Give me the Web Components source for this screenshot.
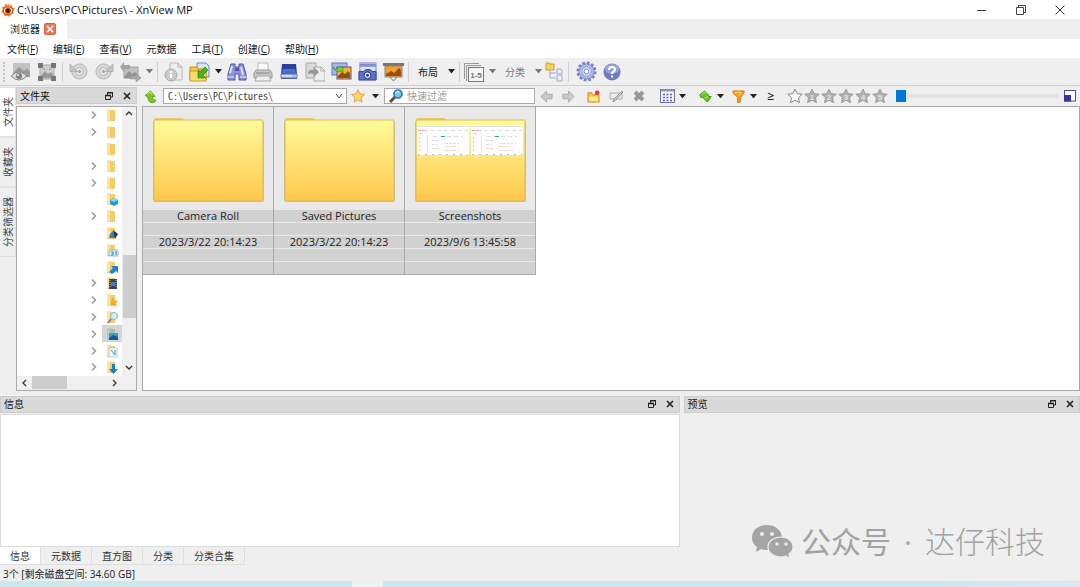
<!DOCTYPE html>
<html lang="zh-CN">
<head>
<meta charset="utf-8">
<title>XnView MP</title>
<style>
html,body{margin:0;height:100%}
body{font:10px/14px "Open Sans","Noto Sans CJK SC",sans-serif;color:#222;background:#efefef;overflow:hidden}
</style>
</head>
<body>
<xn-app></xn-app>
<script>
const ICONS = {
  logo:[14,'0 0 20 20','<path d="M10 0l2 4 4-2v4l4 2-3 3 1 4-4 1-2 4-3-2-4 1-1-4-4-2 3-3-2-4 4-1 1-4 4 2z" fill="#f0882c"/><ellipse cx="10" cy="11" rx="8" ry="6" fill="#d9521b"/><ellipse cx="10" cy="11" rx="6" ry="4.500" fill="#ffe9b8"/><circle cx="10" cy="11" r="4" fill="#a02508"/><circle cx="10" cy="11" r="2" fill="#300"/>'],
  min:[10,'0 0 10 10','<path d="M0 5.500h9" stroke="#444"/>'],
  max:[10,'0 0 10 10','<path d="M.5 2.500h7v7h-7zM2.500 2.500v-2h7v7h-2" fill="none" stroke="#444"/>'],
  cls:[10,'0 0 10 10','<path d="M.5.5l9 9m0-9l-9 9" stroke="#333"/>'],
  x:[8,'0 0 8 8','<path d="M1 1l6 6m0-6l-6 6" stroke="currentColor" stroke-width="1.600"/>'],
  dock:[8,'0 0 8 8','<path d="M.5 3.500h5v4h-5zM2.500 3.500v-3h5v4.500h-2" fill="none" stroke="#222"/><path d="M0 3.500h6M2 .9h6" stroke="#222" stroke-width="1.400"/>'],
  arrow:[7,'0 0 8 5','<path d="M0 0h8L4 5z" fill="currentColor"/>'],
  view:[20,'0 0 20 20','<rect x="2" y="1" width="17" height="14" fill="#c2c2c2"/><path d="M2 11l6-6 5 4 3-3 3 4v5H2z" fill="#9a9a9a"/><path d="M0 14q8-8 16 0-8 8-16 0z" fill="#ddd" stroke="#888"/><circle cx="8" cy="14" r="3" fill="#808080"/><circle cx="7" cy="13" r="1" fill="#eee"/>'],
  full:[20,'0 0 20 20','<rect x="3" y="3" width="14" height="14" fill="#cfcfcf"/><path d="M4 14l4-5 3 3 3-2 3 4v2H4z" fill="#999"/><path d="M3 3h14v14H3z" fill="none" stroke="#aaa"/><path d="M1 1h5v5H1zM14 1h5v5h-5zM1 14h5v5H1zM14 14h5v5h-5z" fill="#777"/><path d="M5 5l3 3M15 5l-3 3M5 15l3-3M15 15l-3-3" stroke="#888"/>'],
  rotl:[19,'0 0 20 20','<circle cx="11" cy="10" r="8" fill="#d6d6d6" stroke="#b4b4b4"/><circle cx="11" cy="10" r="4" fill="#efefef" stroke="#b4b4b4"/><circle cx="11" cy="10" r="1.800" fill="#aaa"/><path d="M1 2v8h8z" fill="#c4c4c4" stroke="#aaa" stroke-width=".8"/>'],
  rotr:[19,'0 0 20 20','<circle cx="9" cy="10" r="8" fill="#d6d6d6" stroke="#b4b4b4"/><circle cx="9" cy="10" r="4" fill="#efefef" stroke="#b4b4b4"/><circle cx="9" cy="10" r="1.800" fill="#aaa"/><path d="M19 2v8h-8z" fill="#c4c4c4" stroke="#aaa" stroke-width=".8"/>'],
  conv:[21,'0 0 21 20','<rect x="4" y="5" width="14" height="11" fill="#c0c0c0" stroke="#a4a4a4"/><path d="M4 15l5-6 3 3 3-2 3 4v2H4z" fill="#939393"/><path d="M0 5l4-5v3h6v4H4v3z" fill="#a4a4a4"/><path d="M10 14h6v-3l5 5-5 4v-3h-6z" fill="#aaa" stroke="#888" stroke-width=".5"/>'],
  info:[19,'0 0 19 20','<path d="M6 1h8l4 4v13H6z" fill="#eee" stroke="#bbb"/><path d="M14 1v4h4" fill="none" stroke="#aaa"/><circle cx="7" cy="13" r="6" fill="#ccc" stroke="#aaa"/><path d="M7 9v2m0 1v4" stroke="#fff" stroke-width="2"/>'],
  open:[21,'0 0 21 20','<path d="M8 1h9l3 3v11H8z" fill="#d7e4fa" stroke="#6b8bd0"/><path d="M1 5h7l1 2h8v11H1z" fill="#f6c443" stroke="#c88a14"/><path d="M1 9h16v10H1z" fill="#ffdb6c" stroke="#d29a20"/><path d="M9 8v8h8l-3-3 5-5-3-3-5 5z" fill="#41b51f" stroke="#27850f" stroke-width=".7"/>'],
  bino:[20,'0 0 20 20','<path d="M4 2h4v3h4V2h4l3 10v6h-7v-6H8v6H1v-6z" fill="#8c93dc" stroke="#4f56a9"/><path d="M3 11l2-7M14 5l2 8" stroke="#dfe2ff" stroke-width="2"/><path d="M1 15h6m6 0h6" stroke="#b9beee" stroke-width="2"/><rect x="8" y="6" width="4" height="3" fill="#4f56a9"/>'],
  print:[20,'0 0 20 20','<path d="M5 1h10v9H5z" fill="#f8f8f8" stroke="#bbb"/><path d="M3 8h14l2 3v5H1v-5z" fill="#c6c6c6" stroke="#999"/><path d="M4 14h12l2 5H2z" fill="#eee" stroke="#aaa"/><path d="M3 11h14" stroke="#888"/>'],
  scan:[18,'0 0 18 18','<path d="M2 1h14l1 10H1z" fill="#2c3f9e"/><path d="M3 6h12l1 4H2z" fill="#4a70cc"/><path d="M1 11h16v4H1z" fill="#a9bcec" stroke="#7383c4"/><path d="M2 13h10" stroke="#fff"/><path d="M1 15.500h16" stroke="#555fa2"/>'],
  export:[20,'0 0 20 20','<path d="M1 1h10v15H1z" fill="#dadada" stroke="#aaa"/><path d="M9 5h7l4 4v10H9z" fill="#eee" stroke="#aaa"/><path d="M16 5v4h4" fill="none" stroke="#aaa"/><path d="M3 12q0-5 6-4V5l5 5-5 5v-3q-4-1-6 0z" fill="#999"/>'],
  batch:[21,'0 0 21 20','<rect x="1" y="1" width="15" height="12" fill="#a8b8ee" stroke="#6475c4"/><rect x="6" y="5" width="14" height="12" fill="#f9b22b" stroke="#4a58aa"/><path d="M7 14l4-4 3 2 3-3 2 2v5H7z" fill="#9b4a0a"/><path d="M2 5q2 3 5 2l-1-2h6v6l-2-2q-6 2-8-4z" fill="#7bc936" stroke="#30890f" stroke-width=".6"/>'],
  cam:[19,'0 0 20 20','<rect x="2" y="1" width="17" height="17" fill="#dce4f7" stroke="#7a86c5"/><path d="M2 2h17v3H2z" fill="#7f8fd8"/><path d="M1 10h5l2-2h5l2 2h4v9H1z" fill="#5d6fc8" stroke="#36458f"/><circle cx="10" cy="14" r="3.500" fill="#dfeaff" stroke="#24347c"/><circle cx="10" cy="14" r="1.500" fill="#24347c"/>'],
  slide:[21,'0 0 21 20','<path d="M7 15l3.500 4 3.500-4" stroke="#777" fill="none"/><path d="M0 1h21v3H0z" fill="#777"/><rect x="2" y="4" width="17" height="11" fill="#f8a020" stroke="#888"/><path d="M3 12l5-3 3 2 5-5 2 2v6H3z" fill="#9c4d0c"/>'],
  pages:[20,'0 0 20 20','<path d="M.5 17V1.500H15M2.500 19V3.500H17" fill="none" stroke="#999"/><rect x="4.500" y="5.500" width="15" height="14" fill="#f5f5f5" stroke="#777"/><text x="12" y="16" text-anchor="middle" font-size="8" font-family="Liberation Sans" font-weight="bold" fill="#777">1-5</text>'],
  tree:[18,'0 0 18 20','<path d="M1 1h3l1 1h4v6H1z" fill="#fbd35b" stroke="#d49b26"/><path d="M5 8v8h6M5 11h6M12 7h4l1 1v4h-5zM12 13h4l1 1v5h-5z" fill="#ececf6" stroke="#a9aac8"/>'],
  gear:[21,'0 0 22 22','<circle cx="11" cy="11" r="9" fill="none" stroke="#7780c4" stroke-width="3" stroke-dasharray="2.800 1.912"/><circle cx="11" cy="11" r="8" fill="#b4bbec" stroke="#7680c6"/><circle cx="11" cy="11" r="5" fill="#d8dcfa" stroke="#8f98d8"/><circle cx="11" cy="11" r="2.500" fill="#fff" stroke="#7680c6"/>'],
  help:[18,'0 0 18 18','<circle cx="9" cy="9" r="8.500" fill="#6f79c4"/><ellipse cx="9" cy="6" rx="7" ry="5" fill="#9aa2e2"/><path d="M6 7q0-3 3-3t3 2.500c0 2-3 2-3 4.500M9 12.500v2" fill="none" stroke="#fff" stroke-width="2"/>'],
  up:[13,'0 0 14 14','<path d="M1 6l6-5 5 6H9c0 3 2 4 4 4-3 5-9 3-9-4z" fill="#7cc51a" stroke="#4c9110" stroke-width=".8"/><path d="M3 5l4-3 2 3" stroke="#d3ef7c" fill="none"/>'],
  chev:[8,'0 0 8 8','<path d="M1 2l3 4 3-4" fill="none" stroke="#555"/>'],
  fav:[14,'0 0 16 16','<path d="M8 .8l2.200 4.800 5.200.6-3.900 3.500 1.100 5.300L8 12.400 3.400 15l1.100-5.300L.6 6.200l5.200-.6z" fill="#fcd469" stroke="#e09838"/>'],
  mag:[14,'0 0 14 14','<path d="M1 13l5-5" stroke="#6b4a3a" stroke-width="3"/><circle cx="9" cy="5" r="4" fill="#7cc4f4" stroke="#2374bd" stroke-width="1.600"/><path d="M6.500 4q2-3 4-1" stroke="#fff" fill="none"/>'],
  back:[13,'0 0 14 14','<path d="M1 7l6-6v3.500h6v5H7V13z" fill="#c9c9c9" stroke="#a9a9a9"/>'],
  fwd:[13,'0 0 14 14','<path d="M13 7L7 1v3.500H1v5h6V13z" fill="#c9c9c9" stroke="#a9a9a9"/>'],
  newf:[13,'0 0 14 14','<path d="M1 3h4l1 2h7v8H1z" fill="#f6c247" stroke="#d08a20"/><path d="M2 7h10v5H2z" fill="#ffe993"/><circle cx="11" cy="3" r="2.500" fill="#dd3c32"/>'],
  ren:[14,'0 0 14 14','<path d="M1 4h12v6H1z" fill="#eee" stroke="#b0b0b0"/><path d="M4 13l1-3 8-8 1 1-7 8z" fill="#ccc" stroke="#888" stroke-width=".8"/>'],
  del:[12,'0 0 12 12','<path d="M2 2l8 8m0-8l-8 8" stroke="#999" stroke-width="4"/>'],
  grid:[15,'0 0 15 14','<rect x=".5" y=".5" width="14" height="13" fill="#f6f6ff" stroke="#6b72b5"/><path d="M1 1.500h13" stroke="#8f95cf" stroke-width="2"/><path d="M3 5.500h9M3 8.500h9M3 11.500h9" stroke="#5b62ad" stroke-width="1.500" stroke-dasharray="2 1.500"/>'],
  tag:[13,'0 0 14 14','<path d="M1 5l5-4 4 4v2h3l-1 2-3 4-5-5H2z" fill="#69c31c" stroke="#3f8d10"/><path d="M3 5l3-3 2 2M6 9l4-2" stroke="#c8f08a" fill="none"/>'],
  fun:[13,'0 0 14 14','<path d="M1 1h12v2L9 8v5l-3 1V8L1 3z" fill="#fb9c16" stroke="#dc7708"/><path d="M3 2.500h7L6.800 7" stroke="#ffe08a" fill="none"/>'],
  frame:[12,'0 0 12 12','<rect x=".5" y=".5" width="11" height="10.500" fill="#fff" stroke="#4b4d9e"/><rect x="0" y="5" width="7" height="6.500" fill="#34349b"/>'],
  star0:[16,'0 0 16 16','<path d="M8 1l2.200 4.600 5 .6-3.700 3.500 1 5L8 12.300 3.500 14.700l1-5L.8 6.200l5-.6z" fill="#fbfbfb" stroke="#888"/>'],
  up1:[8,'0 0 8 8','<path d="M1 6l3-3 3 3" fill="none" stroke="#333" stroke-width="1.300"/>'],
  dn1:[8,'0 0 8 8','<path d="M1 2l3 3 3-3" fill="none" stroke="#333" stroke-width="1.300"/>'],
  lf1:[8,'0 0 8 8','<path d="M6 1L3 4l3 3" fill="none" stroke="#333" stroke-width="1.300"/>'],
  rt1:[8,'0 0 8 8','<path d="M2 1l3 3-3 3" fill="none" stroke="#333" stroke-width="1.300"/>'],
  exp:[8,'0 0 8 8','<path d="M2 .5L5.500 4 2 7.500" fill="none" stroke="#999" stroke-width="1.500"/>'],
  wechat:[42,'0 0 42 36','<path d="M16 1C7 1 1 6 1 14c0 4 2 7 5 9l-1 5 5-3c2 1 4 1 6 1 9 0 15-5 15-12S25 1 16 1z" fill="#a5a5a5"/><path d="M30 13c-7 0-13 4-13 10s6 10 13 10c2 0 4 0 5-1l4 3-1-5c3-2 4-4 4-7 0-6-5-10-12-10z" fill="#a5a5a5" stroke="#efefef" stroke-width="1.200"/><g fill="#efefef"><circle cx="11" cy="10" r="2"/><circle cx="21" cy="10" r="2"/><circle cx="26" cy="20" r="1.700"/><circle cx="35" cy="20" r="1.700"/></g>'],
};
for (let n = 1; n < 6; n++)
  ICONS['star' + n] = [16,'0 0 16 16',`<path d="M8 1l2.200 4.600 5 .6-3.700 3.500 1 5L8 12.300 3.500 14.700l1-5L.8 6.200l5-.6z" fill="#b0b0b0" stroke="#909090" stroke-width=".8"/><text x="8" y="12" text-anchor="middle" font-family="Liberation Sans" font-weight="bold" font-size="8" fill="#e4e4e4">${n}</text>`];

/* Small overlay badges of the folder tree */
const BADGES = {
  none:'',
  cube:'<path d="M5 8l4-2 4 2v4l-4 2-4-2z" fill="#1d9fd8"/><path d="M5 8l4-2 4 2-4 2z" fill="#7ae0f4"/>',
  dark:'<path d="M5 8l3-3 2 7H4z" fill="#3a7dbb"/><path d="M8 4l5 4-3 5z" fill="#333"/>',
  card:'<rect x="4" y="7" width="9" height="6" fill="#d5ecfa" stroke="#6fb5da" stroke-width=".7"/><path d="M6 9h2v3H6m4-3h2m-2 2h2" stroke="#3783b8" fill="none"/>',
  link:'<path d="M4 12l4-4-2-2h7v7l-2-2-4 3z" fill="#1e84d4"/>',
  film:'<rect x="4" y="3" width="8" height="10" fill="#36435b"/><path d="M5 4v8m6-8v8" stroke="#a9b9c8" stroke-dasharray="1 1"/><rect x="6" y="6" width="4" height="4" fill="#4e7ab5"/>',
  star:'<path d="M8 4l1 3 4 1-2 2 1 4-3-2-3 1 0-4z" fill="#fba92a"/>',
  find:'<circle cx="9" cy="6" r="3.500" fill="#d2effc" stroke="#7db8d5"/><path d="M6 9l-3 4" stroke="#779" stroke-width="1.500"/>',
  pic:'<rect x="4" y="6" width="9" height="7" fill="#3b9add"/><path d="M4 11l4-3 5 2v3H4z" fill="#135b9e"/>',
  note:'<rect x="4" y="4" width="8" height="9" fill="#eef7ff" stroke="#9ac2dc" stroke-width=".7"/><path d="M6 6l4 5V6" stroke="#4c92c0" fill="none"/>',
  down:'<path d="M7 4h3v5h3l-4.500 5L4 9h3z" fill="#1a7fd4"/>',
};

function define(name, css, html) {
  const t = document.createElement('template');
  t.innerHTML = `<style>*{box-sizing:border-box}${css}</style>${html}`;
  customElements.define(name, class extends HTMLElement {
    constructor() {
      super();
      this.attachShadow({mode:'open'}).append(t.content.cloneNode(true));
    }
  });
}
customElements.define('xn-icon', class extends HTMLElement {
  connectedCallback() {
    if (this.shadowRoot) return;
    const [w, box, art] = ICONS[this.getAttribute('name')];
    this.attachShadow({mode:'open'}).innerHTML =
      `<style>:host{display:inline-flex;flex:none}svg{display:block}</style><svg width="${w}" viewBox="${box}" aria-hidden="true">${art}</svg>`;
  }
});
const BTN = 'button,select,input{font:inherit;color:inherit;margin:0}button{display:inline-flex;align-items:center;justify-content:center;border:0;background:none;padding:0;flex:none}';
const b = (icon, cls='', label=icon) => `<button class="${cls}" aria-label="${label}"><xn-icon name="${icon}"></xn-icon></button>`;

define('xn-titlebar', `${BTN}:host{display:flex;align-items:center;height:19px;background:#fff;color:#111;font-size:11px;padding:0 10px 0 1px;gap:2px}
 span{flex:1}div{display:flex;gap:19px}button{width:20px;height:19px}`,
 `<xn-icon name="logo"></xn-icon><span>C:\\Users\\PC\\Pictures\\ - XnView MP</span><div>${b('min')}${b('max')}${b('cls')}</div>`);

define('xn-doctabs', `${BTN}:host{display:flex;height:20px;background:#efefef}
 div{display:flex;align-items:center;gap:4px;padding:0 10px;background:#fff;width:67px}
 .c{width:12px;height:12px;background:#e9785c;border:1px solid #d8644a;border-radius:2px;color:#fff}`,
 `<div><span>浏览器</span>${b('x','c','关闭')}</div>`);

define('xn-menubar', `${BTN}:host{display:flex;height:19px;background:#fff;padding:0 7px;gap:15px;color:#111}u{text-underline-offset:1px}`,
 [['文件','F'],['编辑','E'],['查看','V'],['元数据'],['工具','T'],['创建','C'],['帮助','H']].map(([t,k]) => `<button>${t}${k ? `(<u>${k}</u>)` : ''}</button>`).join(''));

define('xn-toolbar', `${BTN}:host{display:flex;align-items:center;height:28px;border-bottom:1px solid #cfcfcf;padding-left:3px}
 button{width:26px;height:24px}.a{width:12px;color:#222}.g{color:#777}.t{width:34px}.p{width:24px}.k{width:20px}
 i{width:5px;height:20px;flex:none;background:linear-gradient(#cfcfcf,#cfcfcf) center/1px 100% no-repeat}
 i.w{width:9px}i.grip{background:none;border-left:2px dotted #c4c4c4}`,
 `<i class="grip"></i>${b('view')}${b('full')}<i></i>${b('rotl')}${b('rotr')}${b('conv')}${b('arrow','a g')}<i></i>${b('info')}${b('open')}${b('arrow','a')}`
 + ['bino','print','scan','export','batch','cam','slide'].map(n => b(n)).join('')
 + `<i></i><button class="t">布局</button>${b('arrow','a')}<i></i>${b('pages','p')}${b('arrow','a g')}<button class="t g">分类</button>${b('arrow','a g')}${b('tree','k')}<i class="w"></i>${b('gear')}${b('help')}`);

define('xn-addressbar', `${BTN}:host{display:flex;align-items:center;height:20px;padding-right:2px}
 .f{display:flex;align-items:center;flex:none;height:16px;border:1px solid #a8a8a8;background:#fff}
 .path{width:184px;padding-right:3px;margin-left:4px}.filter{width:151px;padding-left:4px;gap:4px;margin-left:3px}
 select{appearance:none;border:0;background:none;flex:1;min-width:0;padding:0 4px;outline:0;height:14px;line-height:14px;font-family:"Noto Sans CJK SC",monospace;font-feature-settings:"hwid";color:#444}
 input[type=text]{border:0;background:none;flex:1;min-width:0;padding:0;outline:0;height:14px}input::placeholder{color:#999}
 .grp{display:flex;align-items:center;margin-left:3px}.grp.far{margin-left:8px}
 button{width:22px;height:18px}.n{width:17px}.a{width:12px;color:#222}.m{width:18px}.w{width:24px;font-weight:600;font-size:12px}
 input[type=range]{appearance:none;flex:1;min-width:0;height:14px;background:linear-gradient(#e3e3e3,#e3e3e3) center/100% 4px no-repeat;margin:0 3px 0 8px}
 input[type=range]::-webkit-slider-thumb{appearance:none;width:10px;height:12px;background:#0078d7;border-radius:0}`,
 `${b('up','n','上级')}<div class="f path"><select aria-label="路径"><option>C:\\Users\\PC\\Pictures\\</option></select><xn-icon name="chev"></xn-icon></div>
 ${b('fav')}${b('arrow','a')}<div class="f filter"><xn-icon name="mag"></xn-icon><input type="text" aria-label="快速过滤" placeholder="快速过滤"></div>
 ${b('back')}${b('fwd')}<div class="grp">${b('newf')}${b('ren','w')}${b('del')}</div><div class="grp far">${b('grid','m')}${b('arrow','a')}</div><div class="grp far">${b('tag','m')}${b('arrow','a')}</div><div class="grp">${b('fun','m')}${b('arrow','a')}<button class="w">≥</button></div><div class="grp">`
 + [0,1,2,3,4,5].map(n => b('star' + n, 'n')).join('') + `</div><input type="range" aria-label="缩略图大小" value="0">${b('frame','n')}`);

define('xn-sidetabs', `${BTN}:host{display:flex;flex-direction:column;width:16px;padding-top:1px}
 button{writing-mode:vertical-rl;text-orientation:sideways;transform:rotate(180deg);padding:9px 0;color:#444;border:1px solid #e2e2e2;border-right:0;width:16px}
 .on{background:#fff}`, `<button class="on">文件夹</button><button>收藏夹</button><button>分类筛选器</button>`);

define('xn-dockhead', `${BTN}:host{display:flex;align-items:center;height:17px;flex:none;background:#d9d9d9;border:1px solid #cdcdcd;padding:0 0 0 3px}
 span{flex:1;color:#111}button{width:18px;height:15px}`, `<span><slot></slot></span>${b('dock')}${b('x','','关闭')}`);

const rows = [[1,'none'],[1,'none'],[0,'none'],[1,'none'],[1,'none'],[0,'cube'],[1,'none'],[0,'dark'],[0,'card'],[0,'link'],[1,'film'],[1,'star'],[1,'find'],[1,'pic'],[1,'note'],[1,'down']];
define('xn-tree', `:host{display:grid;grid-template:1fr 14px/1fr 14px;flex:1;min-height:0;border:1px solid #aaa;background:#fff}
 ul{list-style:none;margin:0;padding:0;display:flex;flex-direction:column;min-height:0}
 li{flex:1;min-height:0;display:flex;align-items:center;justify-content:flex-end;gap:4px}
 b{width:20px;height:100%;display:flex;align-items:center;justify-content:center}.sel{background:#d5d5d5}
 .v,.h{display:flex;align-items:center;background:#f0f0f0}.v{flex-direction:column;padding:2px 0 4px}.h{padding:0 3px;grid-column:1/3}
 .v i{width:13px;flex:0 0 24%;background:#cdcdcd}.v s{flex:1}.v s.top{flex:3}.h i{width:35px;height:13px;margin-left:4px;background:#cdcdcd}.h s{flex:1}.h span{width:14px}`,
 `<ul>${rows.map(([e,k]) => `<li>${e ? '<xn-icon name="exp"></xn-icon>' : ''}<b class="${k === 'pic' ? 'sel' : ''}"><svg width="14" height="14" viewBox="0 0 14 14"><path d="M2 1h3l1 1h4v11H2z" fill="${k === 'pic' ? '#a9bd9f' : '#f4cc68'}"/><path d="M2 1h3v12l-3-1z" fill="${k === 'pic' ? '#bdccae' : '#ffe396'}"/>${BADGES[k]}</svg></b></li>`).join('')}</ul>
 <div class="v"><xn-icon name="up1"></xn-icon><s class="top"></s><i></i><s></s><xn-icon name="dn1"></xn-icon></div>
 <div class="h"><xn-icon name="lf1"></xn-icon><i></i><s></s><xn-icon name="rt1"></xn-icon><span></span></div>`);

const shot = x => `<g transform="translate(${x} 8)"><rect width="52" height="30" fill="#fdfdfd"/><path d="M0 1.500h52" stroke="#dfe3e6"/><path d="M1 5.500h9" stroke="#d9a0a0" stroke-dasharray="3 1"/><path d="M13 5.500h38M2 8.500h8M16 11.500h30" stroke="#ddd" stroke-dasharray="4 3"/><path d="M24 11.500h4" stroke="#48c"/><path d="M2.500 12v15" stroke="#bcd0e8" stroke-dasharray="2 2"/><path d="M10.500 10v18" stroke="#e5e5e5"/><path d="M15 15.500h8M15 19.500h6M15 23.500h7M28 18.500h14M28 21.500h12M28 25.500h14" stroke="#ddd" stroke-dasharray="3 1"/><path d="M1 29.500h50" stroke="#a4bed0" stroke-dasharray="2 5"/></g>`;
customElements.define('xn-thumb', class extends HTMLElement {
  constructor() {
    super();
    this.attachShadow({mode:'open'}).innerHTML = `<style>*{box-sizing:border-box}:host{display:block;box-sizing:border-box;width:131px;background:#e9e9e9;border-right:1px solid #a9a9a9;border-bottom:1px solid #a9a9a9;color:#222;font-size:11px}
    .p{display:flex;justify-content:center;padding:10px 0 6px}svg{display:block}.r{display:grid;grid-auto-rows:12px;gap:1px;text-align:center}.r div{background:#d1d1d1;line-height:12px}</style>
    <div class="p"><svg width="114" height="87" viewBox="0 0 114 87"><defs><linearGradient id="g" x2="0" y2="1"><stop stop-color="#fffb9c"/><stop offset="1" stop-color="#ffc84b"/></linearGradient></defs>
    <rect x="2" y="4" width="111" height="81" rx="2" fill="#c9c4b8"/><path d="M3 3q0-2 2-2h26l2 2h77v3H3z" fill="#e9c868"/><rect x="3" y="3" width="109" height="81" rx="1" fill="url(#g)" stroke="#e0b552"/>${this.hasAttribute('preview') ? shot(4) + shot(58) : ''}</svg></div>
    <div class="r"><div><slot></slot></div><div></div><div><slot name="date"></slot></div><div></div><div></div></div>`;
  }
});

define('xn-files', `:host{display:block;flex:1;min-height:0;border:1px solid #a9a9a9;background:#fff}div{display:flex;flex-wrap:wrap}`, `<div><slot></slot></div>`);

define('xn-info', `${BTN}:host{display:flex;flex-direction:column;min-width:0}
 .body{flex:1;background:#fff;border:1px solid #dcdcdc;margin-top:1px}nav{display:flex;height:18px}
 button{padding:0 10px;border-right:1px solid #dedede;border-bottom:1px solid #dedede;color:#333}.on{background:#fff}`,
 `<xn-dockhead>信息</xn-dockhead><div class="body"></div><nav><button class="on">信息</button><button>元数据</button><button>直方图</button><button>分类</button><button>分类合集</button></nav>`);

define('xn-preview', `:host{display:flex;flex-direction:column;min-width:0}
 .body{flex:1;display:flex;align-items:flex-end;justify-content:flex-end;padding:0 35px 5px 0}
 .mark{display:flex;align-items:center;gap:8px;font:300 30px/36px "Open Sans","Noto Sans CJK SC",sans-serif;color:#a2a2a2}.mark b{font-weight:400}
 .mark span{display:flex;gap:13px}`,
 `<xn-dockhead>预览</xn-dockhead><div class="body"><div class="mark"><xn-icon name="wechat"></xn-icon><span><b>公众号</b><b>·</b><span>达仔科技</span></span></div></div>`);

define('xn-status', `:host{display:block;color:#222}div{height:16px;line-height:18px;padding-left:3px}
 footer{height:6px;background:linear-gradient(90deg,#cde8ec 352px,#e8f3f6 352px 383px,#cde8ec 383px 87%,#dbe6f0)}`,
 `<div>3个 [剩余磁盘空间: 34.60 GB]</div><footer></footer>`);

define('xn-app', `:host{display:flex;flex-direction:column;height:100vh}
 main{flex:9;display:flex;min-height:0;padding-bottom:5px}.dock{display:flex;flex-direction:column;gap:2px;width:121px;margin-right:5px;padding-top:1px}
 .view{flex:1;min-width:0;display:flex;flex-direction:column}
 section{flex:5;display:flex;gap:4px;min-height:0}xn-info{flex:12}xn-preview{flex:7}`,
 `<xn-titlebar></xn-titlebar><xn-doctabs></xn-doctabs><xn-menubar></xn-menubar><xn-toolbar></xn-toolbar>
 <main><xn-sidetabs></xn-sidetabs><div class="dock"><xn-dockhead>文件夹</xn-dockhead><xn-tree></xn-tree></div>
 <div class="view"><xn-addressbar></xn-addressbar><xn-files>
 <xn-thumb>Camera Roll<span slot="date">2023/3/22 20:14:23</span></xn-thumb><xn-thumb>Saved Pictures<span slot="date">2023/3/22 20:14:23</span></xn-thumb><xn-thumb preview>Screenshots<span slot="date">2023/9/6 13:45:58</span></xn-thumb></xn-files></div></main>
 <section><xn-info></xn-info><xn-preview></xn-preview></section><xn-status></xn-status>`);
</script>
</body>
</html>
